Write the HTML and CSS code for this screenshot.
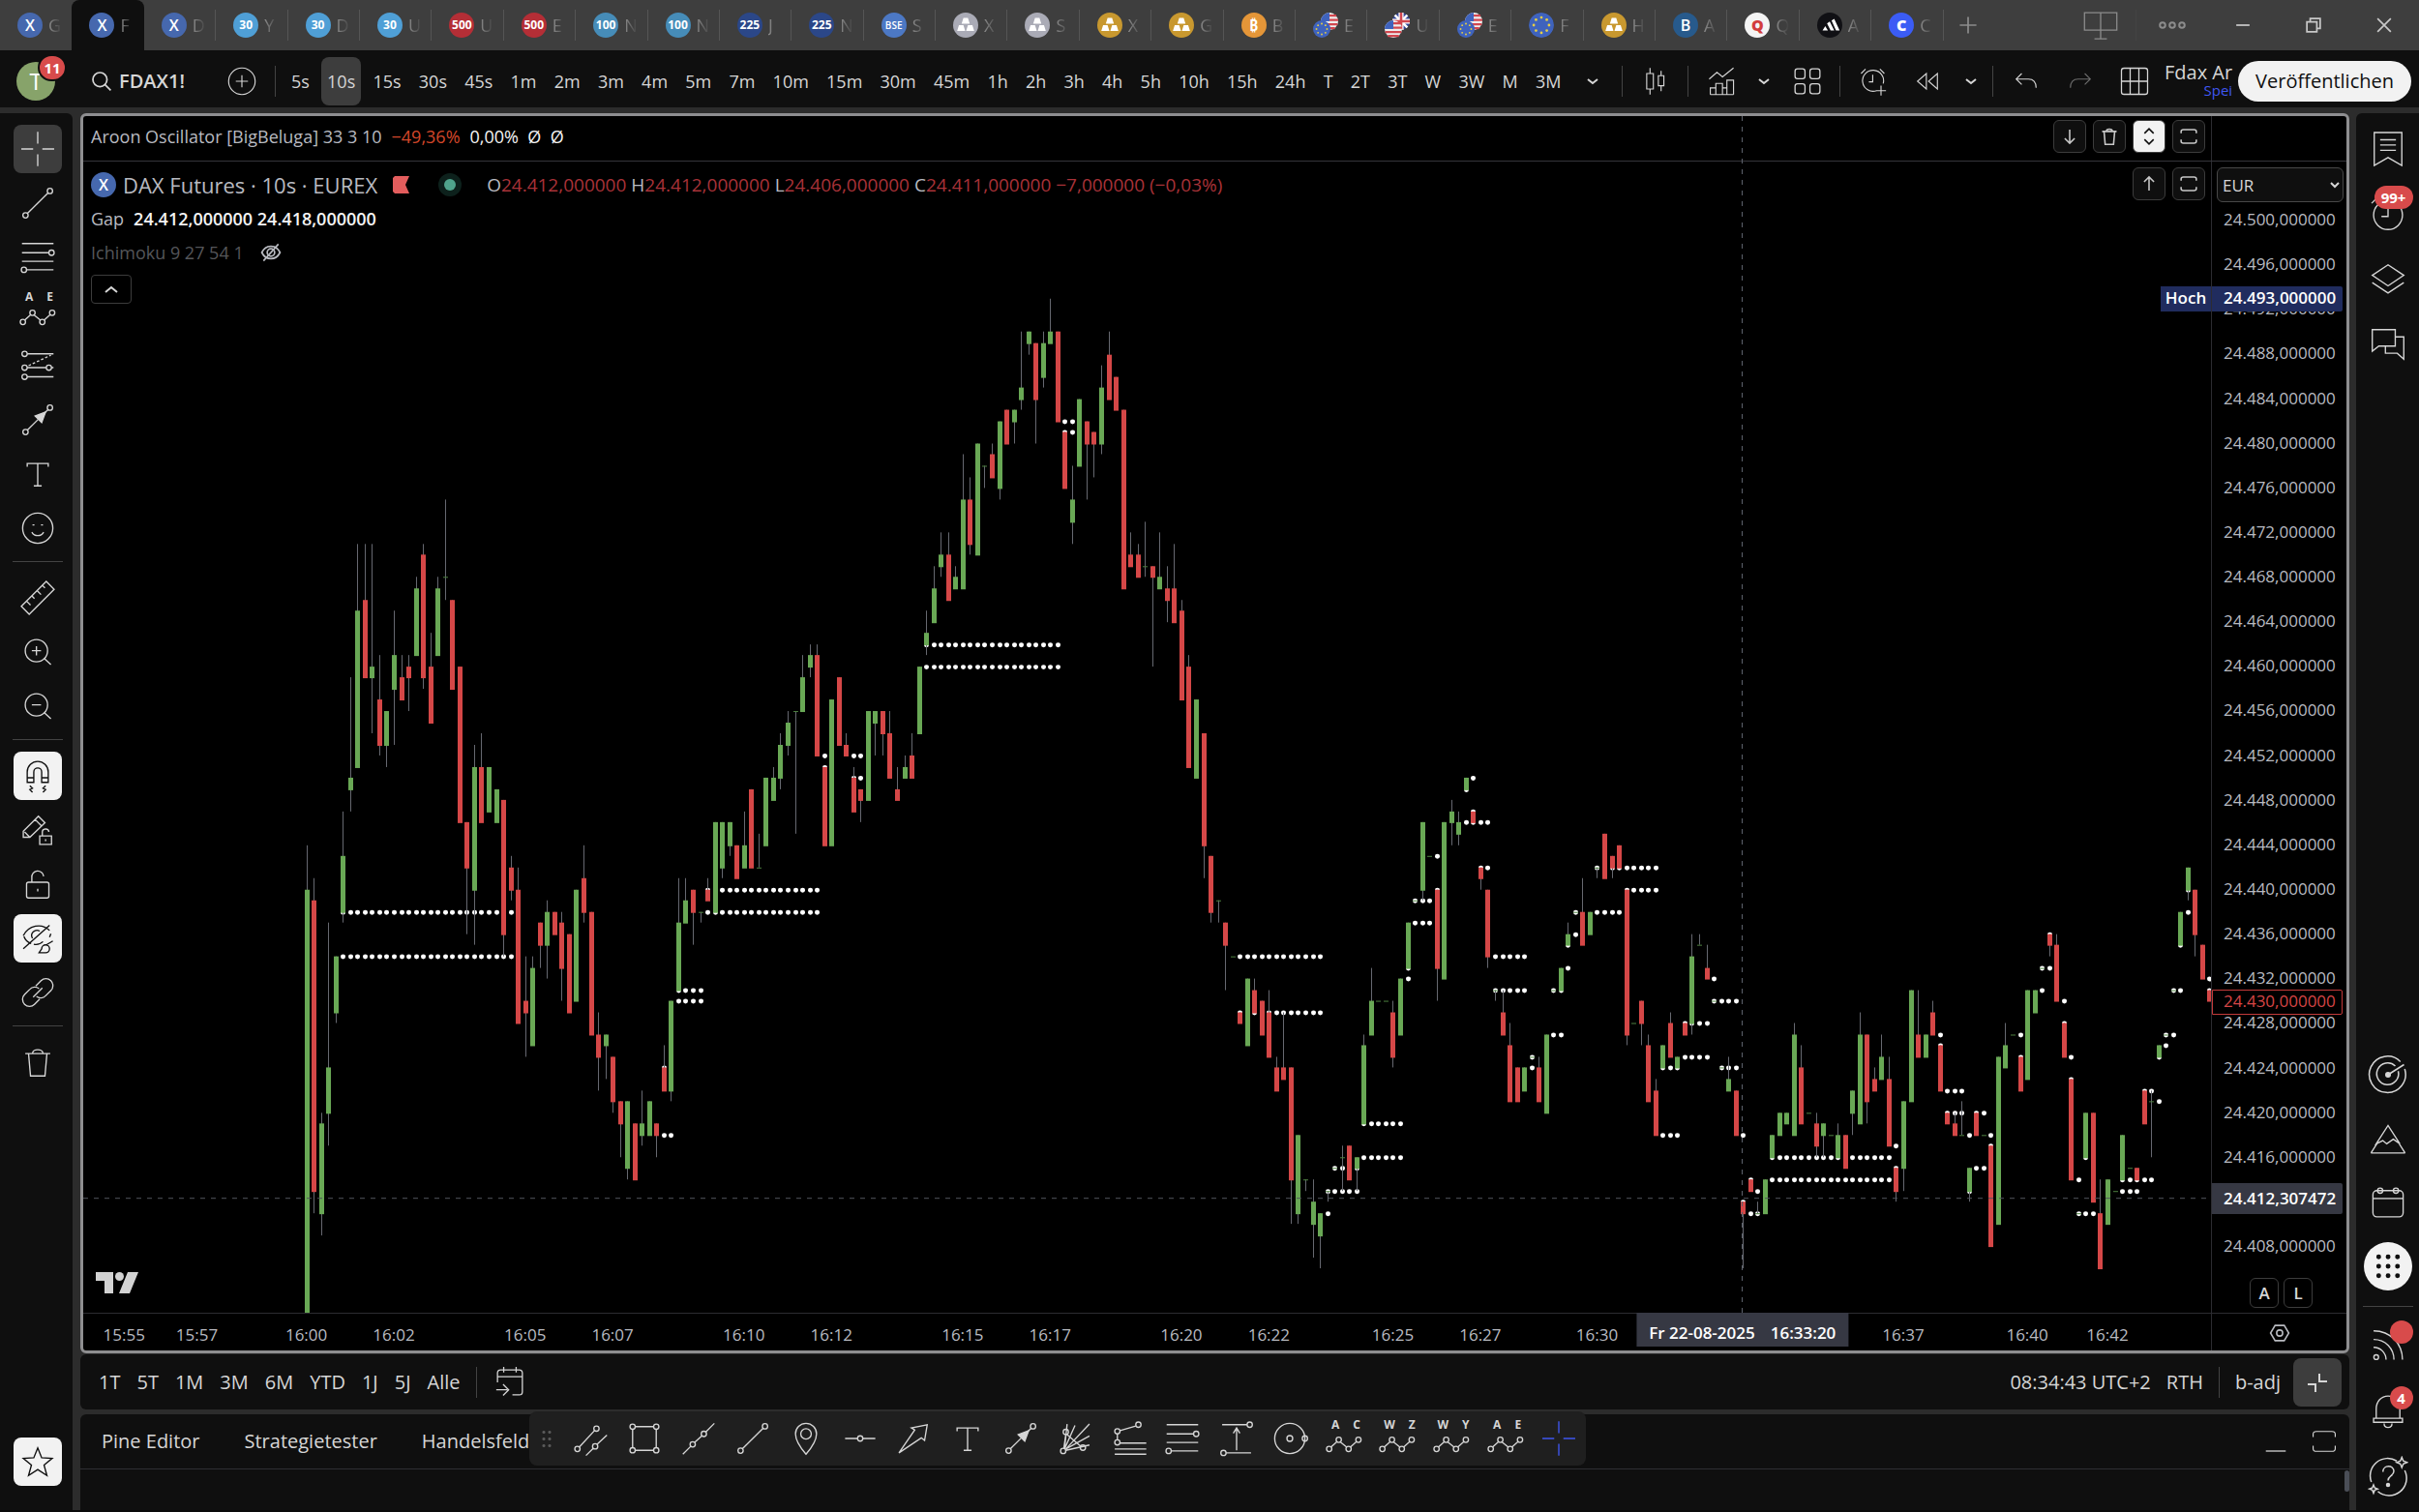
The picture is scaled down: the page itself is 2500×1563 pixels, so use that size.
FILE: index.html
```html
<!DOCTYPE html>
<html lang="de">
<head>
<meta charset="utf-8">
<title>FDAX1! – Chart</title>
<link rel="stylesheet" href="styles.css">
</head>
<body>
<svg class="defs" aria-hidden="true">
  <symbol id="cross" viewBox="0 0 28 28"><path d="M14 1v9M14 18v9M1.500 14h9M17.500 14h9"/></symbol>
  <symbol id="trend" viewBox="0 0 28 28"><circle cx="4.700" cy="23.300" r="2"/><circle cx="23.300" cy="4.700" r="2"/><path d="M6.200 21.800 21.800 6.200"/></symbol>
  <symbol id="fib" viewBox="0 0 28 28"><path d="M2 3.500h24M2 10.500h20.500M2 17h24M5.500 23.500H26"/><circle cx="24.500" cy="10.500" r="2"/><circle cx="3.500" cy="23.500" r="2"/></symbol>
  <symbol id="waves" viewBox="0 0 28 28"><circle cx="2.700" cy="22" r="2"/><circle cx="10" cy="15" r="2"/><circle cx="17.500" cy="22" r="2"/><circle cx="25" cy="15" r="2"/><path d="M4.200 20.500l4.300-4M11.300 16.700l4.800 4M19 20.400l4.500-4"/></symbol>
  <symbol id="forecast" viewBox="0 0 28 28"><path d="M6 5h20M6 15.500h14.500M24.500 15.500H26M6 22.500h20"/><circle cx="4" cy="5" r="2"/><circle cx="4" cy="15.500" r="2"/><circle cx="4" cy="22.500" r="2"/><circle cx="22.500" cy="15.500" r="2"/><path stroke-dasharray="2 1.500" d="M7 14 24 6"/></symbol>
  <symbol id="arrow" viewBox="0 0 28 28"><circle cx="4.700" cy="23.300" r="2"/><circle cx="23.300" cy="4.700" r="2"/><path d="M6.200 21.800 15 13M18 10l3.800-3.800"/><path class="fill" d="M20 8l-3 8-5-5z"/></symbol>
  <symbol id="text" viewBox="0 0 28 28"><path d="M6 8.500V6h16v2.500M14 6v17M11 23h6"/></symbol>
  <symbol id="smile" viewBox="0 0 28 28"><circle cx="14" cy="14" r="11.500"/><path d="M9.500 17c2 3.500 7 3.500 9 0M10 11.500h1.500M16.500 11.500H18"/></symbol>
  <symbol id="ruler" viewBox="0 0 28 28"><path d="M1.500 20.500 20.500 1.500l6 6-19 19zM5.500 16.500l3 3M9.500 12.500l2 2M13.500 8.500l3 3M17.500 4.500l2 2"/></symbol>
  <symbol id="zin" viewBox="0 0 28 28"><circle cx="13" cy="13" r="8.500"/><path d="M19 19l5 4.500M13 9.500v7M9.500 13h7"/></symbol>
  <symbol id="zout" viewBox="0 0 28 28"><circle cx="13" cy="13" r="8.500"/><path d="M19 19l5 4.500M9.500 13h7"/></symbol>
  <symbol id="magnet" viewBox="0 0 28 28"><path d="M6 19V11a8 8 0 0 1 16 0v8h-5v-8a3 3 0 0 0-6 0v8zM6 15.500h5M17 15.500h5M8 21.500l2 2-2 1 2 2M20 21.500l-2 2 2 1-2 2"/></symbol>
  <symbol id="penlock" viewBox="0 0 28 28"><path d="M3 19.500V15L14.500 3.500l5 5-11.500 11H3zM12 6l5 5M4 15.500l4 4M15.500 18.500h9v6.500h-9zM17.500 18.500v-2.500a2.500 2.500 0 0 1 5-.5M20 21v1.500"/></symbol>
  <symbol id="lock" viewBox="0 0 28 28"><rect x="5.500" y="12.500" width="17" height="12" rx="1.500"/><path d="M9.500 12.500V9a4.500 4.500 0 0 1 9-1M14 17.500v2"/></symbol>
  <symbol id="eyeslash" viewBox="0 0 28 28"><path d="M3 12C7 4 17 2 23 8M3.500 12.500c1 3 3 4.500 5.500 5.500M10 14a4 4 0 0 1 5.500-5.500M3 22 23 4M11 18.500c3 .5 5 0 7-2M24 10.500l-1 2.500"/><path d="M15 25h5a3 3 0 1 0-3-3l-2 3zM20.500 19l5-3"/></symbol>
  <symbol id="link" viewBox="0 0 28 28"><path d="M12.500 9l4-4a5.200 5.200 0 0 1 7.500 7.500l-4 4a5.200 5.200 0 0 1-7 .5M15.500 19l-4 4A5.200 5.200 0 0 1 4 15.500l4-4a5.200 5.200 0 0 1 7-.5M10.500 17.500l7-7"/></symbol>
  <symbol id="trash" viewBox="0 0 28 28"><path d="M4.500 7.500h19M10 7.500c0-4 8-4 8 0M7 7.500l1.500 17h11L21 7.500"/></symbol>
  <symbol id="star" viewBox="0 0 28 28"><path d="M14 3.500l3 7.500 8 .5-6.200 5 2.200 8L14 20l-7 4.500 2.200-8L3 11.500l8-.5z"/></symbol>
  <symbol id="chev" viewBox="0 0 28 28"><path d="M9 12l5 4 5-4"/></symbol>
  <symbol id="chevup" viewBox="0 0 28 28"><path d="M8 17l6-5 6 5"/></symbol>
  <symbol id="candles" viewBox="0 0 28 28"><path d="M9 2v5M9 21v5M6 7h6v14H6zM19 4.500V9M19 18v5M16.500 9h5v9h-5z"/></symbol>
  <symbol id="indic" viewBox="0 0 28 28"><path d="M3 12l7-6 5 4L25 2M4 26v-6h5v6M9 26V16h6v10M15 26v-6h4v6M19 26V13h6v13M4 26h21"/></symbol>
  <symbol id="grid4" viewBox="0 0 28 28"><rect x="4" y="4" width="8" height="8" rx="2"/><rect x="16" y="4" width="8" height="8" rx="2"/><rect x="4" y="16" width="8" height="8" rx="2"/><rect x="16" y="16" width="8" height="8" rx="2"/></symbol>
  <symbol id="alarm" viewBox="0 0 28 28"><path d="M17 22.500A9.500 9.500 0 1 1 23 16M13.500 8v6.500H10M3 7l4-4M24 7l-4-4M21 18v9M16.500 22.500h9"/></symbol>
  <symbol id="rewind" viewBox="0 0 28 28"><path d="M13 7v14l-8-7zM23 7v14l-8-7z"/></symbol>
  <symbol id="undo" viewBox="0 0 28 28"><path d="M10 7l-5 5 5 5M5 12h11c5 0 7 3 7 8"/></symbol>
  <symbol id="redo" viewBox="0 0 28 28"><path d="M18 7l5 5-5 5M23 12H12c-5 0-7 3-7 8"/></symbol>
  <symbol id="table" viewBox="0 0 28 28"><rect x="3.500" y="3.500" width="21" height="21" rx="2"/><path d="M10.500 3.500v21M17.500 3.500v21M3.500 14h21"/></symbol>
  <symbol id="search" viewBox="0 0 28 28"><circle cx="12" cy="12" r="8.500"/><path d="M18 18l7 7"/></symbol>
  <symbol id="plusc" viewBox="0 0 28 28"><circle cx="14" cy="14" r="12"/><path d="M14 8.500v11M8.500 14h11"/></symbol>
  <symbol id="down" viewBox="0 0 28 28"><path d="M14 5v18M7.500 16.500 14 23l6.500-6.500"/></symbol>
  <symbol id="up" viewBox="0 0 28 28"><path d="M14 23V5M7.500 11.500 14 5l6.500 6.500"/></symbol>
  <symbol id="updown" viewBox="0 0 28 28"><path d="M8 10l6-6 6 6M8 18l6 6 6-6"/></symbol>
  <symbol id="max" viewBox="0 0 28 28"><path d="M4 10V7.500C4 5.500 5 5 7 5h14c2 0 3 .5 3 2.500V10M4 18v2.500c0 2 1 2.500 3 2.500h14c2 0 3-.5 3-2.500V18"/></symbol>
  <symbol id="book" viewBox="0 0 28 28"><path d="M3.500 1.500h21v25L14 20.500l-10.500 6zM8 7h12M8 11h12M8 15h12"/></symbol>
  <symbol id="clock" viewBox="0 0 28 28"><circle cx="14" cy="15" r="11"/><path d="M14 8v8H9M1.500 6 6 1.500"/></symbol>
  <symbol id="layers" viewBox="0 0 28 28"><path d="M2 11.500 14 3.500l12 8-12 8zM2 17l12 8 12-8"/></symbol>
  <symbol id="chat" viewBox="0 0 28 28"><path d="M2 3.500h17.500v12.500H7L2 20zM20 9h6v17l-5-4.500h-9V16"/></symbol>
  <symbol id="radar" viewBox="0 0 28 28"><path d="M22.500 5A12.500 12.500 0 1 0 25.500 10"/><path d="M19 8a7.500 7.500 0 1 0 2 3.500M14 14 25 7"/><circle class="fill" cx="14" cy="14" r="1.500"/></symbol>
  <symbol id="mount" viewBox="0 0 28 28"><path d="M5 18 14 4l9 14-5-3.500-5 3.500-3-2.500zM1 25l4.500-7M27 25l-4.500-7M1 25h26"/></symbol>
  <symbol id="cal" viewBox="0 0 28 28"><rect x="2.500" y="5" width="23" height="20" rx="3"/><path d="M2.500 11h23"/><circle cx="8" cy="5" r="2"/><circle cx="20" cy="5" r="2"/></symbol>
  <symbol id="nine" viewBox="0 0 28 28"><path class="dots" d="M6 6h.1M14 6h.1M22 6h.1M6 14h.1M14 14h.1M22 14h.1M6 22h.1M14 22h.1M22 22h.1"/></symbol>
  <symbol id="feed" viewBox="0 0 28 28"><circle cx="5" cy="23.500" r="1.800"/><path d="M3 3.500c13 0 22 10 22 22M3 10c9 0 15.500 7 15.500 15.500M3 16c5.500 0 9.500 4.500 9.500 9.500"/></symbol>
  <symbol id="bell" viewBox="0 0 28 28"><path d="M5 20v-7c0-6 4-10 9-10s9 4 9 10v7M3 20h22v3H3zM11 24c0 4 6 4 6 0"/></symbol>
  <symbol id="help" viewBox="0 0 28 28"><path d="M20 3.500A12 12 0 0 0 2.500 18M7 24.500A12 12 0 0 0 25.500 10M10.500 11c0-5 7.500-5 7.500-.5 0 3.500-4 3-4 6.500M23.500 1l1 2.500L27 4.500l-2.500 1-1 2.500-1-2.500-2.500-1 2.500-1zM4 20l.8 2 2 .8-2 .8-.8 2-.8-2-2-.8 2-.8z"/><circle class="fill" cx="14" cy="20" r="1"/></symbol>
  <symbol id="gear" viewBox="0 0 28 28"><path d="M8 4h12l6 10-6 10H8L2 14z"/><circle cx="14" cy="14" r="4"/></symbol>
  <symbol id="goto" viewBox="0 0 28 28"><path d="M4 14V6.500C4 5 5 4 6.500 4h15C23 4 24 5 24 6.500v15c0 1.500-1 2.500-2.500 2.500H16M4 9.500h20M9 1.500V6M19 1.500V6M3 20h9M8.500 15.500 13 20l-4.500 4.500"/></symbol>
  <symbol id="collapse" viewBox="0 0 28 28"><path d="M16 5v8h8M4 16h8v8"/></symbol>
  <symbol id="chan" viewBox="0 0 28 28"><circle cx="3.500" cy="22" r="2"/><circle cx="18" cy="6.500" r="2"/><circle cx="17" cy="20" r="2"/><path d="M5 20.500 16.500 8M10 27l5.500-5.500M18.500 18.500 26 11.500"/></symbol>
  <symbol id="rect" viewBox="0 0 28 28"><circle cx="5" cy="5" r="2"/><circle cx="23" cy="5" r="2"/><circle cx="5" cy="23" r="2"/><circle cx="23" cy="23" r="2"/><path d="M7 5h14M7 23h14M5 7v14M23 7v14"/></symbol>
  <symbol id="ray" viewBox="0 0 28 28"><circle cx="9.500" cy="18.500" r="2"/><circle cx="18" cy="10.500" r="2"/><path d="M2 26l6-6M11 17l5.500-5M19.500 9 26 2.500"/></symbol>
  <symbol id="pin" viewBox="0 0 28 28"><path d="M14 26C8 19 6 15 6 10.500a8 8 0 0 1 16 0C22 15 20 19 14 26z"/><circle cx="14" cy="10.500" r="4"/></symbol>
  <symbol id="hline" viewBox="0 0 28 28"><circle cx="14" cy="14" r="2"/><path d="M2.500 14H12M16 14h9.500"/></symbol>
  <symbol id="bigarrow" viewBox="0 0 28 28"><path d="M3 25 15 7.500 12.500 6 24.500 3.500 22.500 15.500 20 13.500z"/></symbol>
  <symbol id="fan" viewBox="0 0 28 28"><circle cx="5" cy="23.500" r="2"/><circle cx="7" cy="9" r="2"/><circle cx="20" cy="21" r="2"/><path d="M6 22 8 3M6 22l8-18M7 22 25 3M7 22 25 12M7 23l18-4M8 11l10.500 9M5.500 21.500 7 11"/></symbol>
  <symbol id="fibext" viewBox="0 0 28 28"><circle cx="5" cy="17" r="2"/><circle cx="5" cy="8.500" r="2"/><circle cx="21" cy="3.500" r="2"/><path d="M7 8 19 4.500M5 10.500V15M7 17.500h20M3 22h24M3 26h24"/></symbol>
  <symbol id="range" viewBox="0 0 28 28"><circle cx="24" cy="3.500" r="2"/><circle cx="4" cy="25" r="2"/><path d="M3 3.500h19M6 25h19M14 23V7M11.500 10 14 6l2.500 4"/></symbol>
  <symbol id="circ" viewBox="0 0 28 28"><circle cx="14" cy="14" r="11.500"/><circle cx="14" cy="14" r="2.200"/><circle cx="25.500" cy="14" r="2"/></symbol>
  <symbol id="share" viewBox="0 0 28 28"><path d="M1 4h26v14H1zM14 4v21M9 25h10"/></symbol>
  <symbol id="triple" viewBox="0 0 28 28"><circle cx="4" cy="14" r="2.800"/><circle cx="14" cy="14" r="2.800"/><circle cx="24" cy="14" r="2.800"/></symbol>
  <symbol id="wmin" viewBox="0 0 28 28"><path d="M6 14h16"/></symbol>
  <symbol id="wres" viewBox="0 0 28 28"><path d="M6 10h12v12H6zM10 10V6h12v12h-4"/></symbol>
  <symbol id="wclose" viewBox="0 0 28 28"><path d="M6 6l16 16M22 6 6 22"/></symbol>
  <symbol id="plus" viewBox="0 0 28 28"><path d="M14 4v20M4 14h20"/></symbol>
  <symbol id="hide" viewBox="0 0 28 28"><path d="M3 14c5-10 17-10 22 0-5 10-17 10-22 0zM5 24 23 4"/><circle cx="14" cy="14" r="4.500"/></symbol>
  <symbol id="ingots" viewBox="0 0 28 28"><path d="M11.500 6h5l2 6.500h-9zM6.500 14h5l2 6.500h-9zM16.500 14h5l2 6.500h-9z"/></symbol>
  <symbol id="eu" viewBox="0 0 28 28"><circle cx="14" cy="14" r="14" fill="#3f63bd"/><g fill="#e5cd45"><circle cx="14" cy="5.500" r="1.500"/><circle cx="20" cy="8" r="1.500"/><circle cx="22.500" cy="14" r="1.500"/><circle cx="20" cy="20" r="1.500"/><circle cx="14" cy="22.500" r="1.500"/><circle cx="8" cy="20" r="1.500"/><circle cx="5.500" cy="14" r="1.500"/><circle cx="8" cy="8" r="1.500"/></g></symbol>
  <symbol id="us" viewBox="0 0 28 28"><circle cx="14" cy="14" r="14" fill="#eee"/><path d="M14 5h11M14 12h14M1 19h26M5 25h18" stroke="#d2474f" stroke-width="3.500"/><path d="M14 0v14H0A14 14 0 0 1 14 0z" fill="#3f63bd"/></symbol>
  <symbol id="uk" viewBox="0 0 28 28"><circle cx="14" cy="14" r="14" fill="#36489b"/><path d="M4 4l20 20M24 4 4 24" stroke="#fff" stroke-width="4"/><path d="M14 0v28M0 14h28" stroke="#fff" stroke-width="8"/><path d="M14 0v28M0 14h28" stroke="#d2474f" stroke-width="4"/></symbol>
</svg>

<header class="tabs" id="tabs"></header>

<div class="toolbar">
  <div class="avatar">T<span class="badge">11</span></div>
  <button class="symbol"><svg class="i s24 bold"><use href="#search"/></svg>FDAX1!</button>
  <button class="add" aria-label="Vergleichen"><svg class="i s32"><use href="#plusc"/></svg></button>
  <i class="vsep"></i>
  <nav class="frames" id="frames"></nav>
  <i class="vsep"></i>
  <button class="t68"><svg class="i s32"><use href="#candles"/></svg></button>
  <i class="vsep"></i>
  <button class="t68"><svg class="i s32"><use href="#indic"/></svg></button>
  <button class="t20"><svg class="i s28"><use href="#chev"/></svg></button>
  <button class="t68"><svg class="i s36"><use href="#grid4"/></svg></button>
  <i class="vsep"></i>
  <button class="t68"><svg class="i s32"><use href="#alarm"/></svg></button>
  <button class="t44"><svg class="i s32"><use href="#rewind"/></svg></button>
  <button class="t44"><svg class="i s28"><use href="#chev"/></svg></button>
  <i class="vsep"></i>
  <button class="t68"><svg class="i s32"><use href="#undo"/></svg></button>
  <button class="t44 dim"><svg class="i s32"><use href="#redo"/></svg></button>
  <button class="t68"><svg class="i s36"><use href="#table"/></svg></button>
  <div class="layout"><span>Fdax Ar</span><a href="#">Spei</a></div>
  <button class="publish">Veröffentlichen</button>
</div>

<main class="main">
  <aside class="rail left" id="left"></aside>

  <section class="center">
    <div class="chart">
      <div class="pane top">
        <p class="legend">Aroon Oscillator [BigBeluga] 33 3 10 <b class="orange">−49,36%</b> <b class="white">0,00%&nbsp; Ø&nbsp; Ø</b></p>
        <div class="ctl">
          <button><svg class="i s22"><use href="#down"/></svg></button>
          <button><svg class="i s22"><use href="#trash"/></svg></button>
          <button class="on"><svg class="i s22 bold"><use href="#updown"/></svg></button>
          <button><svg class="i s22"><use href="#max"/></svg></button>
        </div>
        <div class="axis"></div>
      </div>
      <div class="pane price">
        <div class="plot">
          <svg id="plot" viewBox="0 0 2199 1192" preserveAspectRatio="none" role="img" aria-label="DAX Futures, 10 Sekunden"></svg>
          <div class="legends">
            <div class="title"><span class="coin blue">X</span><h1>DAX Futures · 10s · EUREX</h1><svg class="flag" viewBox="0 0 17 18"><path d="M0 2 2 0h15l-4 9 4 9H2l-2-2z" fill="#e35d5d"/></svg><span class="live"></span>
              <p class="ohlc">O<b>24.412,000000</b> H<b>24.412,000000</b> L<b>24.406,000000</b> C<b>24.411,000000 −7,000000 (−0,03%)</b></p></div>
            <p class="legend">Gap <b class="white gap">24.412,000000 24.418,000000</b></p>
            <p class="legend faint">Ichimoku 9 27 54 1 <svg class="i s24"><use href="#hide"/></svg></p>
            <button class="fold"><svg class="i s28"><use href="#chevup"/></svg></button>
          </div>
          <div class="ctl over">
            <button><svg class="i s22"><use href="#up"/></svg></button>
            <button><svg class="i s22"><use href="#max"/></svg></button>
          </div>
          <svg class="tv" viewBox="0 0 44 22"><path d="M0 0h18v22H9V9H0zM33 0h11l-9 22H24z"/><circle cx="24.500" cy="4.500" r="4.500"/></svg>
          <span class="tag hoch">Hoch</span>
        </div>
        <div class="axis">
          <select class="cur" aria-label="Währung"><option>EUR</option></select>
          <ol class="prices" id="prices"></ol>
          <div class="modes"><button>A</button><button>L</button></div>
          <span class="tag high">24.493,000000</span>
          <span class="tag last">24.430,000000</span>
          <span class="tag cursor">24.412,307472</span>
        </div>
      </div>
      <div class="pane time">
        <div class="times" id="times"><span class="tag when"><span>Fr 22-08-2025</span><span>16:33:20</span></span></div>
        <div class="axis"><button class="cog"><svg class="i s22"><use href="#gear"/></svg></button></div>
      </div>
      <i class="vline"></i>
    </div>

    <div class="ranges">
      <div class="rlist"><button>1T</button><button>5T</button><button>1M</button><button>3M</button><button>6M</button><button>YTD</button><button>1J</button><button>5J</button><button>Alle</button></div>
      <i class="vsep"></i>
      <button class="goto"><svg class="i s36"><use href="#goto"/></svg></button>
      <span class="clock">08:34:43 UTC+2</span>
      <button>RTH</button>
      <i class="vsep"></i>
      <button>b-adj</button>
      <button class="shrink"><svg class="i s28"><use href="#collapse"/></svg></button>
    </div>

    <div class="panel">
      <div class="ptabs">
        <button>Pine Editor</button><button>Strategietester</button><button>Handelsfeld</button>
        <svg class="i s36 pmin"><use href="#wmin"/></svg><svg class="i s32"><use href="#max"/></svg>
      </div>
      <i class="thumb"></i>
      <div class="float" id="float"><i class="grip"></i></div>
    </div>
  </section>

  <aside class="rail right">
    <button><svg class="i s38"><use href="#book"/></svg></button>
    <button><svg class="i s38"><use href="#clock"/></svg><span class="badge wide">99+</span></button>
    <button><svg class="i s38"><use href="#layers"/></svg></button>
    <button><svg class="i s38"><use href="#chat"/></svg></button>
    <i class="push"></i>
    <button><svg class="i s42"><use href="#radar"/></svg></button>
    <button><svg class="i s38"><use href="#mount"/></svg></button>
    <button><svg class="i s38"><use href="#cal"/></svg></button>
    <button class="round"><svg class="i s32"><use href="#nine"/></svg></button>
    <i class="hsep"></i>
    <button><svg class="i s38"><use href="#feed"/></svg><span class="badge"></span></button>
    <button><svg class="i s38"><use href="#bell"/></svg><span class="badge">4</span></button>
    <button><svg class="i s42"><use href="#help"/></svg></button>
  </aside>
</main>
<script src="chart.js"></script>
</body>
</html>
```

FILE: styles.css
```css
* { box-sizing: border-box; }
body { margin: 0; height: 100vh; display: flex; flex-direction: column; overflow: hidden; background: #2c2c2c; color: #d6d6d6; font: 18px/24px "Open Sans", "Noto Sans", sans-serif; font-weight: 500; }
button, select { font: inherit; color: inherit; background: none; border: 0; padding: 0; margin: 0; }
button { display: flex; align-items: center; justify-content: center; flex: none; }
p, h1, ol { margin: 0; padding: 0; font: inherit; }
.defs { position: absolute; width: 0; height: 0; }

.i { fill: none; stroke: currentColor; stroke-width: 1px; flex: none; }
.i .fill, .fill { fill: currentColor; }
.dots { stroke-width: 4px; stroke-linecap: round; }
.bold { stroke-width: 2px; }
.s22 { width: 22px; height: 22px; }
.s24 { width: 24px; height: 24px; }
.s28 { width: 28px; height: 28px; }
.s32 { width: 32px; height: 32px; }
.s36 { width: 36px; height: 36px; }
.s38 { width: 38px; height: 38px; }
.s42 { width: 42px; height: 42px; }
.s22, .s24, .s28 { stroke-width: 2px; }
.vsep { width: 1px; height: 32px; background: #434343; flex: none; }
.hsep { width: 52px; height: 1px; background: #434343; flex: none; }
.badge { position: absolute; display: flex; align-items: center; justify-content: center; min-width: 24px; height: 24px; border-radius: 12px; background: #d84b4b; color: #fff; font-size: 15px; font-weight: 700; }

/* window tabs */
.tabs { flex: none; height: 52px; display: flex; align-items: center; background: #3e3e3e; }
.tab { flex: 0 0 2.976%; height: 52px; display: flex; align-items: center; padding-left: 18px; gap: 6px; color: #868686; position: relative; }
.tab::after { content: ""; position: absolute; right: 0; top: 10px; height: 32px; width: 1px; background: #555; }
.tab.active, .tab.first { z-index: 1; }
.tab.active { background: #0f0f0f; border-radius: 8px 8px 0 0; }
.tab.active::after, .tab.first::after { display: none; }
.tab .t { width: 14px; overflow: hidden; -webkit-mask-image: linear-gradient(90deg, #000, transparent); mask-image: linear-gradient(90deg, #000 10%, transparent); }
.coin { width: 26px; height: 26px; border-radius: 50%; display: flex; flex: none; align-items: center; justify-content: center; color: #fff; font-size: 16px; line-height: 26px; font-weight: 600; overflow: hidden; }
.coin.small { font-size: 12px; font-weight: 700; }
.coin.tiny { font-size: 10px; }
.coin svg { width: 26px; height: 26px; fill: #fff; }
.blue { background: #4668ae; }
.sky { background: #4f9fd6; }
.red { background: #b42e36; }
.teal { background: #468cb8; }
.navy { background: #2b4788; }
.mid { background: #4c78c4; }
.silver { background: #aaabb6; }
.gold { background: #c8982f; }
.btc { background: #e59638; }
.bank { background: #275a8c; }
.quo { background: #f4f4f4; color: #d23c3c; font-weight: 800; }
.black { background: #101014; }
.cb { background: #3b5cf5; font-weight: 800; }
.pair { width: 26px; height: 26px; position: relative; flex: none; }
.pair svg { position: absolute; width: 18px; height: 18px; }
.pair svg:first-child { right: 0; top: 0; }
.pair svg:last-child { left: 0; bottom: 0; }
.win { display: flex; align-items: center; margin-left: auto; color: #c8c8c8; }
.win button { width: 73px; height: 52px; }
.newtab { width: 50px; color: #8c8c8c; }
.win .grey { color: #8c8c8c; }

/* toolbar */
.toolbar { flex: none; height: 59px; display: flex; align-items: center; background: #0f0f0f; padding: 4px 8px 0 0; }
.avatar { position: relative; width: 40px; height: 40px; margin: 0 36px 0 17px; border-radius: 50%; background: #87a36a; color: #fff; font-size: 24px; line-height: 40px; text-align: center; }
.avatar .badge { right: -12px; top: -8px; border: 2px solid #0f0f0f; min-width: 30px; height: 28px; border-radius: 14px; }
.symbol { gap: 6px; width: 130px; justify-content: flex-start; font-weight: 600; font-size: 20px; }
.add { width: 54px; }
.toolbar .add { margin-right: 7px; }
.frames { flex: 1; display: flex; justify-content: space-between; padding: 0 10px; }
.frames button { height: 50px; padding: 0 6px; border-radius: 8px; }
.frames .on { background: #3d3d3d; }
.t68 { width: 67px; }
.t44 { width: 45px; }
.t20 { width: 22px; }
.toolbar .dim { color: #6c6c6c; }
.layout { width: 70px; display: flex; flex-direction: column; align-items: flex-end; padding-right: 2px; font-size: 20px; line-height: 19px; white-space: nowrap; }
.layout a { color: #3f57f0; font-size: 15px; text-decoration: none; }
.publish { margin-left: 4px; height: 42px; padding: 0 18px; border-radius: 21px; background: #f2f2f2; color: #0f0f0f; font-size: 20px; }

/* frame */
.main { flex: 1; min-height: 0; display: flex; gap: 8px; padding: 6px 0 0; border-bottom: 2px solid #0a0a0a; }
.rail { flex: none; background: #0f0f0f; display: flex; flex-direction: column; align-items: center; }
.left { width: 75px; padding: 12px 0 25px 2px; gap: 6px; border-radius: 0 6px 0 0; }
.left button { position: relative; width: 50px; height: 50px; border-radius: 8px; }
.left .hsep { margin: 3px 0 6px; }
.left .sel { background: #3d3d3d; }
.left .lit { background: #f2f2f2; color: #0f0f0f; }
.left .end { margin-top: auto; }
.lab { position: absolute; top: 3px; left: 2px; width: 100%; display: flex; justify-content: center; gap: 14px; font-size: 12px; line-height: 14px; font-weight: 700; }
.right { width: 65px; padding: 3px 0 1px; border-radius: 6px 0 0 0; }
.right button { position: relative; width: 64px; height: 67px; }
.right .push { flex: 1; }
.right button:nth-child(n+6) { height: 66px; }
.right button:nth-child(n+11) { height: 68px; }
.right .badge { right: 6px; top: 9px; }
.right .wide { min-width: 40px; top: 5px; }
.right .round::before { content: ""; position: absolute; width: 50px; height: 50px; border-radius: 50%; background: #f2f2f2; }
.right .round svg { position: relative; color: #0f0f0f; width: 34px; height: 34px; }
.right .hsep { margin: 8px 0 5px; }
.center { flex: 1; min-width: 0; display: flex; flex-direction: column; margin-right: -1px; }

/* chart */
.chart { flex: 1; min-height: 0; position: relative; display: flex; flex-direction: column; background: #000; border: 3px solid #8e8e90; border-radius: 6px; color: #b8bac0; font-size: 17px; }
.pane { display: flex; position: relative; }
.pane .axis { flex: none; width: 140px; border-left: 1px solid #2c2c31; position: relative; }
.top { height: 47px; border-bottom: 1px solid #34343a; }
.top .legend { flex: 1; padding: 9px 0 0 8px; }
.legend { height: 35px; line-height: 24px; display: flex; gap: 10px; font-size: 18px; white-space: nowrap; }
.legend b { font-weight: 500; }
.white { color: #f4f4f4; }
.orange { color: #d4472a; }
.legend .gap { font-weight: 600; }
.faint { color: #55565a; }
.faint .i { color: #b8bac0; margin-left: 6px; }
.ctl { display: flex; gap: 7px; padding: 4px 6px 0 0; }
.ctl button { width: 34px; height: 34px; border: 1px solid #3c3c3c; border-radius: 6px; background: #0f0f0f; color: #c8c8c8; }
.ctl .on { background: #f2f2f2; color: #0f0f0f; }
.over { position: absolute; right: 0; top: 2px; }
.price { flex: 1; min-height: 0; }
.plot { flex: 1; position: relative; min-width: 0; }
#plot { position: absolute; inset: 0; width: 100%; height: 100%; display: block; }
.legends { position: absolute; left: 8px; top: 11px; }
.title { display: flex; align-items: center; height: 26px; margin-bottom: 10px; }
.title h1 { font-size: 22px; margin: 0 16px 0 7px; white-space: nowrap; }
.flag { width: 17px; height: 18px; }
.live { width: 12px; height: 12px; border-radius: 50%; background: #4fa48c; box-shadow: 0 0 0 6px #0d211c; margin: 0 32px 0 36px; }
.ohlc { font-size: 19px; white-space: nowrap; }
.ohlc b { color: #a83238; font-weight: 500; }
.fold { width: 42px; height: 30px; border: 1px solid #3c3c3c; border-radius: 4px; color: #d6d6d6; }
.tv { position: absolute; left: 13px; bottom: 20px; width: 44px; height: 22px; fill: #d2d2d2; }
.tag { position: absolute; z-index: 2; color: #fff; white-space: nowrap; }
.hoch { right: 0; top: 10.831%; width: 52px; height: 26px; background: #202c5e; text-align: center; font-weight: 600; }
.axis .tag { left: 0; width: 135px; padding-left: 12px; border-radius: 0 2px 2px 0; font-weight: 600; }
.axis .high { top: 10.831%; height: 26px; background: #202c5e; }
.axis .last { top: 71.900%; height: 26px; line-height: 22px; padding-left: 11px; border: 1px solid #c33a3a; color: #d64545; background: #000; font-weight: 500; }
.axis .cursor { top: 88.749%; height: 32px; line-height: 32px; background: #363843; }
.axis .cur { display: block; position: absolute; left: 5px; top: 6px; width: 131px; height: 36px; padding-left: 1px; border: 1px solid #484848; border-radius: 6px; background: #0f0f0f; color: #d6d6d6; }
.prices { list-style: none; position: absolute; left: 12px; top: 3.100%; height: 93.050%; display: flex; flex-direction: column; }
.prices li { flex: 1; display: flex; align-items: center; }
.modes { position: absolute; bottom: 5px; left: 39px; display: flex; gap: 5px; }
.modes button { width: 30px; height: 31px; border: 1px solid #3c3c3c; border-radius: 6px; color: #d6d6d6; font-weight: 600; }
.time { height: 39px; border-top: 1px solid #2c2c31; }
.times { flex: 1; position: relative; }
.times .tick { position: absolute; top: 10px; transform: translateX(-50%); font-size: 17px; }
.when { left: 77.980%; top: -1px; transform: translateX(-50%); height: 35px; line-height: 42px; padding: 0 13px; display: flex; gap: 16px; background: #363843; font-size: 17px; font-weight: 600; }
.cog { width: 140px; height: 39px; }
.vline { position: absolute; left: 73.300%; top: 0; bottom: 39px; width: 1px; background: repeating-linear-gradient(#5d626c 0 5px, transparent 5px 11px); }

/* range bar */
.ranges { flex: none; height: 57px; margin-top: 1px; display: flex; align-items: center; gap: 16px; padding: 0 8px 0 19px; background: #0f0f0f; border-radius: 6px; font-size: 20px; }
.rlist { display: flex; gap: 17px; }
.clock { margin-left: auto; }
.ranges .shrink { width: 50px; height: 50px; border-radius: 8px; background: #3d3d3d; margin-left: -3px; }

/* bottom panel */
.panel { flex: none; height: 99px; margin-top: 5px; position: relative; background: #0f0f0f; border-radius: 6px 6px 0 0; }
.ptabs { height: 57px; display: flex; align-items: center; gap: 46px; padding: 0 10px 0 22px; border-bottom: 1px solid #2f2f33; font-size: 20px; }
.ptabs .pmin { margin-left: auto; align-self: flex-end; margin-right: -30px; }
.thumb { position: absolute; right: 0; top: 58px; width: 5px; height: 22px; border-radius: 3px; background: #4a4e57; }
.float { position: absolute; left: 464px; top: -3px; width: 1092px; height: 56px; display: flex; align-items: center; padding-left: 12px; border-radius: 8px; background: #1f1f1f; }
.float button { position: relative; flex: 1; height: 56px; }
.float .lab { top: 7px; }
.grip { width: 12px; height: 20px; margin-right: 12px; background: radial-gradient(circle, #5a5a5a 1px, transparent 2px) 0 0 / 6px 7px; }
.float .tinted { color: #3f57f0; }
```

FILE: chart.js
```js
const $ = id => document.getElementById(id);
const icon = (id, size) => `<svg class="i s${size}"><use href="#${id}"/></svg>`;

// Window tabs: title, badge class, badge content
const use = id => `<svg><use href="#${id}"/></svg>`;
const tabs = [
  ['G', 'blue', 'X'], ['F', 'blue', 'X'], ['D', 'blue', 'X'],
  ['Y', 'sky small', '30'], ['D', 'sky small', '30'], ['U', 'sky small', '30'],
  ['U', 'red small', '500'], ['E', 'red small', '500'],
  ['N', 'teal small', '100'], ['N', 'teal small', '100'],
  ['J', 'navy small', '225'], ['N', 'navy small', '225'], ['S', 'mid tiny', 'BSE'],
  ['X', 'silver', use('ingots')], ['S', 'silver', use('ingots')],
  ['X', 'gold', use('ingots')], ['G', 'gold', use('ingots')], ['B', 'btc', '₿'],
  ['E', 'pair', use('us') + use('eu')], ['U', 'pair', use('uk') + use('us')], ['E', 'pair', use('us') + use('eu')],
  ['F', 'eu', use('eu')], ['H', 'gold', use('ingots')], ['A', 'bank', 'B'],
  ['Q', 'quo', 'Q'], ['A', 'black', '<svg viewBox="0 0 28 28"><path d="M6 20l3-5 3 5zM11 12l3-2 5 10h-4zM16 9l3-2 6 13h-4z"/></svg>'], ['C', 'cb', 'C']
];
$('tabs').innerHTML = tabs.map(([t, c, b], i) =>
  `<div class="tab${i === 1 ? ' active' : i === 0 ? ' first' : ''}"><span class="${c === 'pair' ? 'pair' : 'coin ' + c}">${b}</span><span class="t">${t}</span></div>`
).join('') + `<button class="newtab">${icon('plus', 24)}</button>
  <div class="win"><button class="grey">${icon('share', 36)}</button><i class="vsep"></i><button class="grey">${icon('triple', 28)}</button>
  <button>${icon('wmin', 24)}</button><button>${icon('wres', 24)}</button><button>${icon('wclose', 24)}</button></div>`;

$('frames').innerHTML = '5s 10s 15s 30s 45s 1m 2m 3m 4m 5m 7m 10m 15m 30m 45m 1h 2h 3h 4h 5h 10h 15h 24h T 2T 3T W 3W M 3M'
  .split(' ').map(f => `<button${f === '10s' ? ' class="on"' : ''}>${f}</button>`).join('') +
  `<button class="more">${icon('chev', 28)}</button>`;

const lab = (a, b) => `<span class="lab"><span>${a}</span><span>${b}</span></span>`;
const tools = ['cross:sel', 'trend', 'fib', 'waves', 'forecast', 'arrow', 'text', 'smile', '-', 'ruler', 'zin', 'zout', '-',
  'magnet:lit', 'penlock', 'lock', 'eyeslash:lit', 'link', '-', 'trash', 'star:lit end'];
$('left').innerHTML = tools.map(t => {
  if (t === '-') return '<i class="hsep"></i>';
  const [id, cls] = t.split(':');
  return `<button class="${cls || ''}">${id === 'waves' ? lab('A', 'E') : ''}${icon(id, 38)}</button>`;
}).join('');

const fav = ['chan', 'rect', 'ray', 'trend', 'pin', 'hline', 'bigarrow', 'text', 'arrow', 'fan', 'fibext', 'fib', 'range', 'circ',
  'waves:AC', 'waves:WZ', 'waves:WY', 'waves:AE', 'cross'];
$('float').innerHTML += fav.map(f => {
  const [id, l] = f.split(':');
  return `<button class="${id === 'cross' ? 'tinted' : ''}">${l ? lab(l[0], l[1]) : ''}${icon(id, 38)}</button>`;
}).join('');

// Axes
let prices = '';
for (let p = 500; p >= 408; p -= 4) prices += `<li>24.${p},000000</li>`;
$('prices').innerHTML = prices;

const STEP = 7.536, X0 = 230.6, UNIT = 11.546, TOP = 500, W = 2199;
const times = { '15:55': -25, '15:57': -15, '16:00': 0, '16:02': 12, '16:05': 30, '16:07': 42, '16:10': 60, '16:12': 72, '16:15': 90,
  '16:17': 102, '16:20': 120, '16:22': 132, '16:25': 149, '16:27': 161, '16:30': 177, '16:37': 219, '16:40': 236, '16:42': 247 };
$('times').insertAdjacentHTML('afterbegin', Object.entries(times).map(([t, i]) =>
  `<span class="tick" style="left:${((X0 + STEP * i) / W * 100).toFixed(3)}%">${t}</span>`).join(''));

// One candle each: direction, high, body top, body bottom, low (24.xxx)
const candles = `G444,440,400,400 R441,439,413,411 G420,419,411,409 G437,424,420,417 G434,434,429,428 G447,443,438,437 G459,450,449,447
G471,465,451,451 R471,466,459,459 G471,460,459,454 R461,457,453,452 G456,456,453,451 G465,461,458,453 R461,459,457,457 R461,460,459,456
G468,467,461,461 R471,470,459,458 R463,460,455,455 G468,467,461,461 G475,468,468,466 R466,466,458,458 R460,460,446,446 R446,446,442,436
G453,451,440,435 R454,451,446,446 G451,451,447,447 G449,449,446,446 R448,448,436,434 R443,442,440,439 R442,440,428,428 R434,430,429,425
G434,433,426,426 R437,437,435,433 G439,438,435,432 R438,438,436,436 R438,437,433,430 R436,436,429,429 G440,440,430,430 R444,441,438,437
R438,438,427,427 R429,427,425,422 G427,427,426,423 R425,425,421,420 R421,421,419,416 G421,421,415,414 R419,419,414,414 G422,419,418,417
G421,421,418,418 R419,419,418,416 R426,424,422,422 G430,430,422,421 G441,437,431,431 G441,439,437,437 R440,440,438,435 G438,438,438,437
R441,440,439,439 G446,446,438,438 G446,446,442,441 G446,446,444,443 R444,444,441,441 G447,444,442,442 R449,449,442,442 G445,442,442,442
G450,450,444,444 G451,450,448,448 G454,453,450,449 G456,455,453,452 G456,456,456,445 G461,459,456,456 G462,461,460,459 R462,461,452,452
R451,451,444,444 G457,457,444,444 R459,459,453,453 R454,453,452,452 R451,450,447,447 R449,449,448,446 G456,456,448,448 G456,456,455,452
R456,456,454,452 R456,454,450,450 R451,449,448,448 G452,451,450,450 R454,452,450,450 G460,460,454,454 G465,463,462,461 G469,467,464,464
G472,470,469,468 R472,470,466,466 G469,468,467,467 G479,475,467,467 R477,475,471,470 G480,480,470,470 G478,478,478,476 R480,479,477,477
G482,482,476,475 R483,483,480,480 G483,483,482,480 G490,485,484,483 G490,490,489,488 R489,489,484,480 G490,489,486,485 G493,490,489,489
R490,490,482,482 R481,481,476,476 G478,475,473,471 G484,484,478,478 R482,482,480,475 R481,481,480,477 G487,485,480,479 R490,488,484,484
R486,486,483,483 R483,483,467,467 R472,470,469,469 R471,470,468,468 G473,469,469,468 R469,469,468,460 G472,468,467,467 R469,467,466,464
R471,467,464,464 R466,465,457,457 R461,460,451,451 G457,457,450,450 R454,454,444,441 R443,443,438,437 G439,439,439,437 R437,437,435,431
G434,434,434,434 R429,429,428,428 G432,432,426,426 R432,431,429,429 R430,430,427,427 R431,429,425,425 R425,424,422,422 R429,424,423,423
R424,424,414,410 G418,418,411,410 G414,414,414,413 G414,412,410,407 G411,411,409,406 G413,413,413,412 G415,415,415,415 G417,416,416,413
R417,417,414,414 G416,416,415,413 G427,426,419,419 G433,430,427,427 G430,430,430,430 G430,430,430,430 R430,429,425,424 G432,432,427,427
G437,437,433,433 G439,439,439,439 G446,446,440,439 G443,443,443,443 R440,440,433,430 G446,446,432,432 G448,447,446,444 G447,446,445,444
G450,450,449,449 R447,447,446,446 R442,442,441,440 R440,440,434,433 G431,431,431,430 R431,429,427,427 R428,426,421,421 R424,424,421,421
G424,424,422,422 G425,425,425,425 R425,424,421,421 G427,427,420,420 G431,431,431,431 G433,433,431,431 G437,436,435,435 G438,438,438,438
R441,438,435,435 G438,438,436,436 G442,442,442,441 R445,445,441,441 R443,443,442,441 R444,444,442,442 R440,440,427,426 G428,428,428,428
R430,430,428,426 R427,426,421,421 R423,422,418,418 G426,426,424,424 R429,428,425,425 G425,425,424,424 R428,428,427,427 G436,434,428,427
G436,435,435,435 R435,433,432,432 G430,430,430,430 G424,424,424,424 G425,423,422,422 R422,422,418,418 R412,412,411,406 R414,414,413,413
G412,411,411,411 G414,414,411,411 G418,418,416,416 G420,420,418,418 G420,420,419,419 G428,427,418,418 R426,424,419,419 G420,420,420,420
R420,419,417,416 G419,419,418,416 G418,418,418,418 G419,418,416,416 R418,418,415,415 G422,422,420,418 G429,427,419,419 R427,427,421,419
R424,423,422,422 G427,425,423,423 R425,423,417,417 R415,415,413,412 G421,421,415,413 G431,431,421,421 R431,427,425,425 G427,427,425,425
R430,429,427,427 R426,426,422,422 R420,420,419,419 R420,419,418,418 G421,418,418,418 G415,415,413,412 R420,420,418,418 G418,418,418,418
R417,417,408,408 G425,425,410,410 G428,426,424,424 G427,427,427,427 R425,425,422,422 G431,431,423,423 G431,431,429,429 G433,433,433,433
R436,436,435,434 R436,435,430,430 R428,428,425,425 R423,423,414,414 G411,411,411,411 G420,420,416,416 R420,420,412,412 R414,411,406,406
G414,414,410,410 G413,413,413,413 G418,418,414,414 G415,415,415,415 R415,415,414,414 R422,422,419,419 G422,421,421,416 G426,426,425,425
G427,427,427,427 G431,431,431,431 G438,438,435,435 G442,442,440,439 R440,440,436,434 R435,435,432,432 R431,431,430,430`.split(/\s+/);

// Gap levels: price:first-last bar
const gaps = `438:5-28 434:5-28 424:49-49 418:49-50 431:51-54 430:51-54 440:55-55 440:57-70 438:55-70 452:71-71 451:71-71 452:75-76 450:75-76
462:85-103 460:85-103 482:104-105 481:104-105 434:128-139 429:128-139 413:140-144 411:140-140 415:141-144 419:145-150 416:145-150
433:151-151 432:151-151 439:152-154 437:152-154 443:155-155 440:155-155 446:159-162 449:159-159 450:160-160 447:160-160 442:161-162
434:163-167 431:163-167 425:168-168 424:168-168 427:171-172 431:171-172 433:173-173 435:173-173 436:174-174 438:174-174 438:177-180
442:177-185 440:181-185 418:186-188 424:186-188 428:189-192 425:189-192 432:193-193 430:193-196 424:194-196 418:197-197 412:197-197
414:198-198 411:198-199 413:199-199 416:201-217 414:201-217 417:218-218 415:218-218 427:224-224 426:224-224 422:225-227 420:225-227
418:228-228 413:228-228 420:229-230 415:229-230 418:231-231 417:231-231 427:235-235 425:235-235 431:238-238 433:238-239 436:239-239
430:241-241 428:241-241 425:242-242 423:242-242 414:243-243 411:243-245 416:244-244 414:249-253 413:249-251 422:252-253 421:254-254
425:254-254 427:255-256 426:255-255 431:256-257 435:257-257 438:258-258 440:258-258 432:261-261 431:261-261`.split(/\s+/);

const x = i => Math.round(X0 + STEP * i);
const y = p => Math.round((TOP - p) * UNIT + 61);
let out = '';
for (const g of gaps) {
  const [p, a, b] = g.split(/[:-]/).map(Number);
  for (let i = a; i <= b; i++) out += `<circle cx="${x(i) + 0.5}" cy="${y(p) + 0.5}" r="2.500" fill="#fff"/>`;
}
candles.forEach((c, i) => {
  const [h, t, b, l] = c.slice(1).split(',').map(Number);
  const up = c[0] === 'G', X = x(i), doji = t === b;
  out += `<path d="M${X + 0.5} ${y(h)}V${y(l)}" stroke="#666870"/>`;
  out += `<rect x="${X - 2}" y="${y(t)}" width="5" height="${doji ? 1 : y(b) - y(t) + 1}" fill="${up ? (doji ? '#4d8040' : '#69a855') : '#d54747'}"/>`;
});
const cy = y(412.307) - 0.5;
out += `<path d="M0 ${cy}H${W}" stroke="#50545d" stroke-dasharray="5 6"/>`;
$('plot').innerHTML = out;
```
